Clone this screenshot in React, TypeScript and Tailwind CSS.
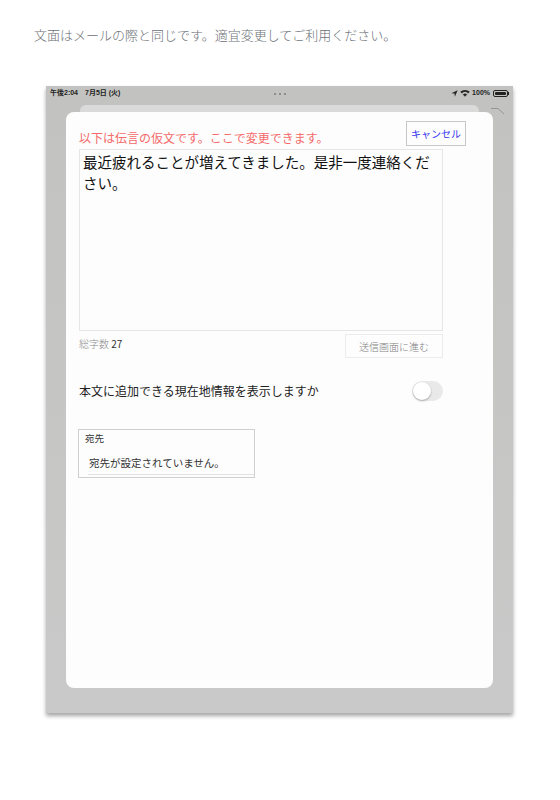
import React from "react";

const jp = { fontFamily: '"Noto Sans CJK JP", "Noto Sans", sans-serif' };
const latin = { fontFamily: '"Liberation Sans", "Noto Sans CJK JP", sans-serif' };

function StatusBar() {
  return (
    <div className="flex items-center justify-between h-[14px] pl-[4px] pr-[4px] text-[7px] font-semibold text-[#222]" style={latin}>
      <div className="flex gap-[7px] w-[120px]">
        <span>午後2:04</span>
        <span>7月5日 (火)</span>
      </div>
      <div className="flex gap-[3px] pt-[2px]">
        <span className="w-[2px] h-[2px] rounded-full bg-[#7a7a7a]" />
        <span className="w-[2px] h-[2px] rounded-full bg-[#7a7a7a]" />
        <span className="w-[2px] h-[2px] rounded-full bg-[#7a7a7a]" />
      </div>
      <div className="flex items-center justify-end gap-[2px] w-[120px]">
        <svg width="7" height="7" viewBox="0 0 10 10">
          <path d="M9.5 0.5 L0.5 4.5 L5 5 L5.5 9.5 Z" fill="#222" />
        </svg>
        <svg width="10" height="8" viewBox="0 0 20 15">
          <path d="M10 14.5 L0.5 5 A14 14 0 0 1 19.5 5 Z" fill="#222" />
          <path d="M10 14.5 L3.5 8 A9.5 9.5 0 0 1 16.5 8 Z" fill="#c5c5c3" />
          <path d="M10 14.5 L6 10.5 A5.5 5.5 0 0 1 14 10.5 Z" fill="#222" />
        </svg>
        <span>100%</span>
        <div className="flex items-center ml-[1px]">
          <div className="w-[15px] h-[7px] rounded-[2px] border border-[#222] p-[1px]">
            <div className="w-full h-full bg-[#222] rounded-[1px]" />
          </div>
          <div className="w-[1px] h-[3px] bg-[#222]" />
        </div>
      </div>
    </div>
  );
}

function Toggle() {
  return (
    <div className="w-[31px] h-[20px] rounded-full bg-[#e9e9ea] p-[1px]">
      <div className="w-[18px] h-[18px] rounded-full bg-white shadow-[0_1px_2px_rgba(0,0,0,0.3)]" />
    </div>
  );
}

export default function App() {
  return (
    <div className="w-[560px] h-[800px] bg-white" style={jp}>
      <p className="pt-[26px] pl-[34px] text-[13px] leading-[18px] font-light text-[#6c7177]">
        文面はメールの際と同じです。適宜変更してご利用ください。
      </p>

      <div className="relative ml-[46px] mt-[42px] w-[467px] h-[627px] bg-gradient-to-b from-[#c2c3c0] to-[#c9c9c9] shadow-[0_3px_4px_rgba(0,0,0,0.35)]">
        <StatusBar />
        <div className="mt-[5px] mx-[34px] h-[7px] rounded-t-[6px] bg-[#dadada]" />
        <svg className="absolute left-[445px] top-[20px]" width="14" height="10" viewBox="0 0 14 10">
          <path d="M0 2.5 H7 L13 8" stroke="#8a8a8a" strokeWidth="0.8" fill="none" />
        </svg>

        <div className="mx-[20px] h-[576px] rounded-[8px] bg-[#fdfdfd] pl-[13px] pr-[27px] pt-[9px]">
          <div className="flex items-end justify-between">
            <span className="text-[12px] leading-[16px] text-[#f46a6a]">
              以下は伝言の仮文です。ここで変更できます。
            </span>
            <div className="w-[60px] h-[25px] flex items-center justify-center border border-[#c8c8c8] text-[10px] text-[#3535f0]">
              キャンセル
            </div>
          </div>

          <div className="mt-[3px] w-[364px] h-[182px] border border-[#e6e6e6] pl-[3px] pr-[3px] pt-[1px] text-[14.5px] leading-[21px] text-[#111]">
            最近疲れることが増えてきました。是非一度連絡ください。
          </div>

          <div className="mt-[3px] w-[364px] flex items-start justify-between">
            <span className="pt-[3px] text-[10px] leading-[14px] text-[#8a8a8a] font-light">
              総字数 <span className="text-[#333] font-normal">27</span>
            </span>
            <div className="w-[98px] h-[24px] flex items-center justify-center border border-[#ececec] text-[10px] font-light text-[#808080]">
              送信画面に進む
            </div>
          </div>

          <div className="mt-[23px] w-[364px] flex items-center justify-between">
            <span className="text-[12px] leading-[16px] text-[#222]">
              本文に追加できる現在地情報を表示しますか
            </span>
            <Toggle />
          </div>

          <div className="mt-[28px] -ml-[1px] w-[177px] h-[49px] border border-[#d0d0d0] pt-[2px]">
            <div className="pl-[6px] text-[9.5px] leading-[12px] text-[#333]">宛先</div>
            <div className="mt-[12px] ml-[9px] pl-[1px] pb-[4px] border-b border-[#e2e2e2] text-[10.5px] leading-[14px] text-[#333]">
              宛先が設定されていません。
            </div>
          </div>
        </div>
      </div>
    </div>
  );
}
